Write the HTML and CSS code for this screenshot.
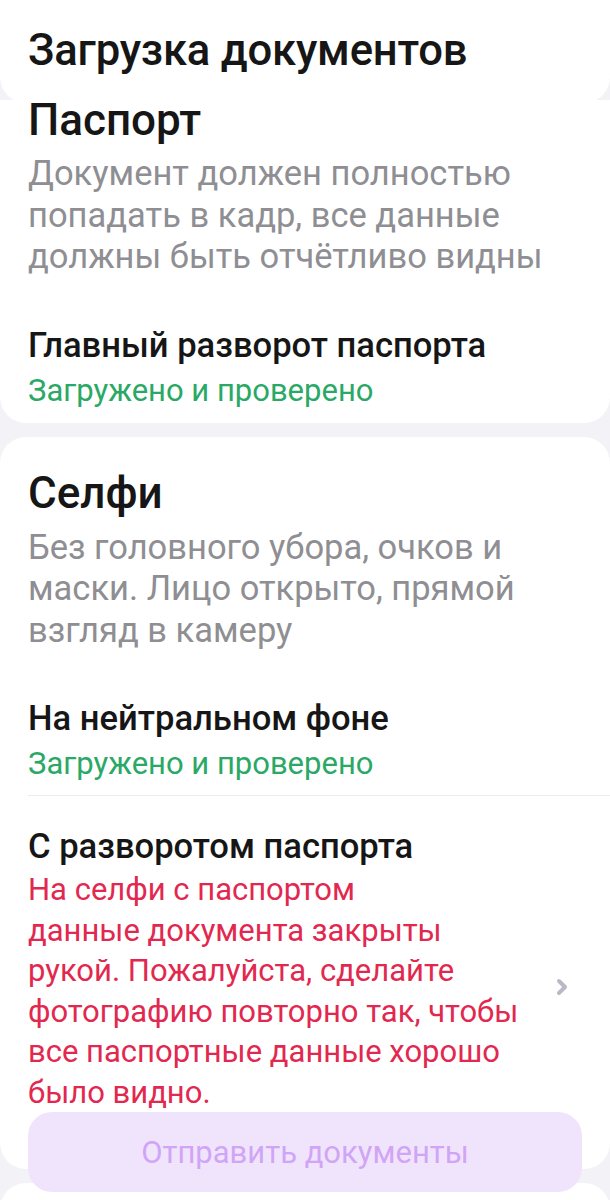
FILE: index.html
```html
<!DOCTYPE html>
<html lang="ru">
<head>
  <meta charset="UTF-8">
  <title>Загрузка документов</title>
  <link rel="stylesheet" href="styles.css">
</head>
<body>

  <div class="header">
    <h1>Загрузка документов</h1>
  </div>

  <div class="card card-first">
    <h2>Паспорт</h2>
    <p class="desc">Документ должен полностью<br>попадать в кадр, все данные<br>должны быть отчётливо видны</p>
    <div class="item">
      <div class="item-title">Главный разворот паспорта</div>
      <div class="status ok">Загружено и проверено</div>
    </div>
  </div>

  <div class="card card-selfie">
    <h2>Селфи</h2>
    <p class="desc">Без головного убора, очков и<br>маски. Лицо открыто, прямой<br>взгляд в камеру</p>
    <div class="rows">
      <div class="row">
        <div class="row-body">
          <div class="item-title">На нейтральном фоне</div>
          <div class="status ok">Загружено и проверено</div>
        </div>
      </div>
      <div class="row row-last">
        <div class="row-body">
          <div class="item-title">С разворотом паспорта</div>
          <div class="status error">На селфи с паспортом<br>данные документа закрыты<br>рукой. Пожалуйста, сделайте<br>фотографию повторно так, чтобы<br>все паспортные данные хорошо<br>было видно.</div>
        </div>
        <svg class="chevron" width="12" height="18" viewBox="0 0 12 18">
          <path d="M3 3 L9 9 L3 15" fill="none" stroke="#b9b9c8" stroke-width="4" stroke-linecap="round" stroke-linejoin="round"/>
        </svg>
      </div>
    </div>
  </div>

  <div class="card card-next"></div>

  <button class="send">Отправить документы</button>

</body>
</html>
```

FILE: styles.css
```css
body {
  margin: 0;
  font-family: Roboto, 'Noto Sans', sans-serif;
  background-color: #f2f2f7;
  color: #161616;
  height: 1200px;
  overflow: hidden;
}

.header {
  background-color: #ffffff;
  border-radius: 0 0 26px 26px;
  padding: 26px 28px 27px;
}

h1 {
  margin: 0;
  font-size: 43.6px;
  font-weight: 500;
  line-height: 50px;
  letter-spacing: -0.2px;
}

.card {
  background-color: #ffffff;
  border-radius: 26px;
  padding: 0 0 0 28px;
}

.card-first {
  border-radius: 0 0 26px 26px;
  padding-bottom: 12px;
}

.card-first h2 {
  margin-top: -3px;
}

.card-first .desc {
  margin-top: 13px;
}

.card-selfie {
  margin-top: 14px;
  padding-top: 36px;
}

.card-next {
  margin-top: 14px;
  height: 60px;
}

h2 {
  margin: 0;
  font-size: 44px;
  font-weight: 500;
  line-height: 40px;
}

.desc {
  margin: 14px 0 0;
  font-size: 34.5px;
  line-height: 41.5px;
  color: #8e8e93;
}

.item {
  margin-top: 49px;
}

.item-title {
  font-size: 34.6px;
  font-weight: 500;
  line-height: 36px;
}

.status {
  font-size: 31px;
  line-height: 40px;
  margin-top: 8px;
}

.ok {
  color: #2aa866;
}

.error {
  color: #e2284f;
  margin-top: 6px;
  line-height: 40.5px;
}

.rows {
  margin-top: 17px;
}

.row {
  display: flex;
  align-items: center;
  padding: 32px 42px 11px 0;
  border-bottom: 1px solid #ebebf0;
}

.row-last {
  border-bottom: none;
  padding-bottom: 56px;
}

.row-body {
  flex: 1;
}

.chevron {
  flex-shrink: 0;
  margin-top: 32px;
}

.send {
  position: fixed;
  left: 28px;
  right: 28px;
  bottom: 8px;
  height: 80px;
  border: none;
  border-radius: 24px;
  background-color: #f0e4fc;
  color: #d1a5f6;
  font-family: Roboto, 'Noto Sans', sans-serif;
  font-size: 31px;
}
```
